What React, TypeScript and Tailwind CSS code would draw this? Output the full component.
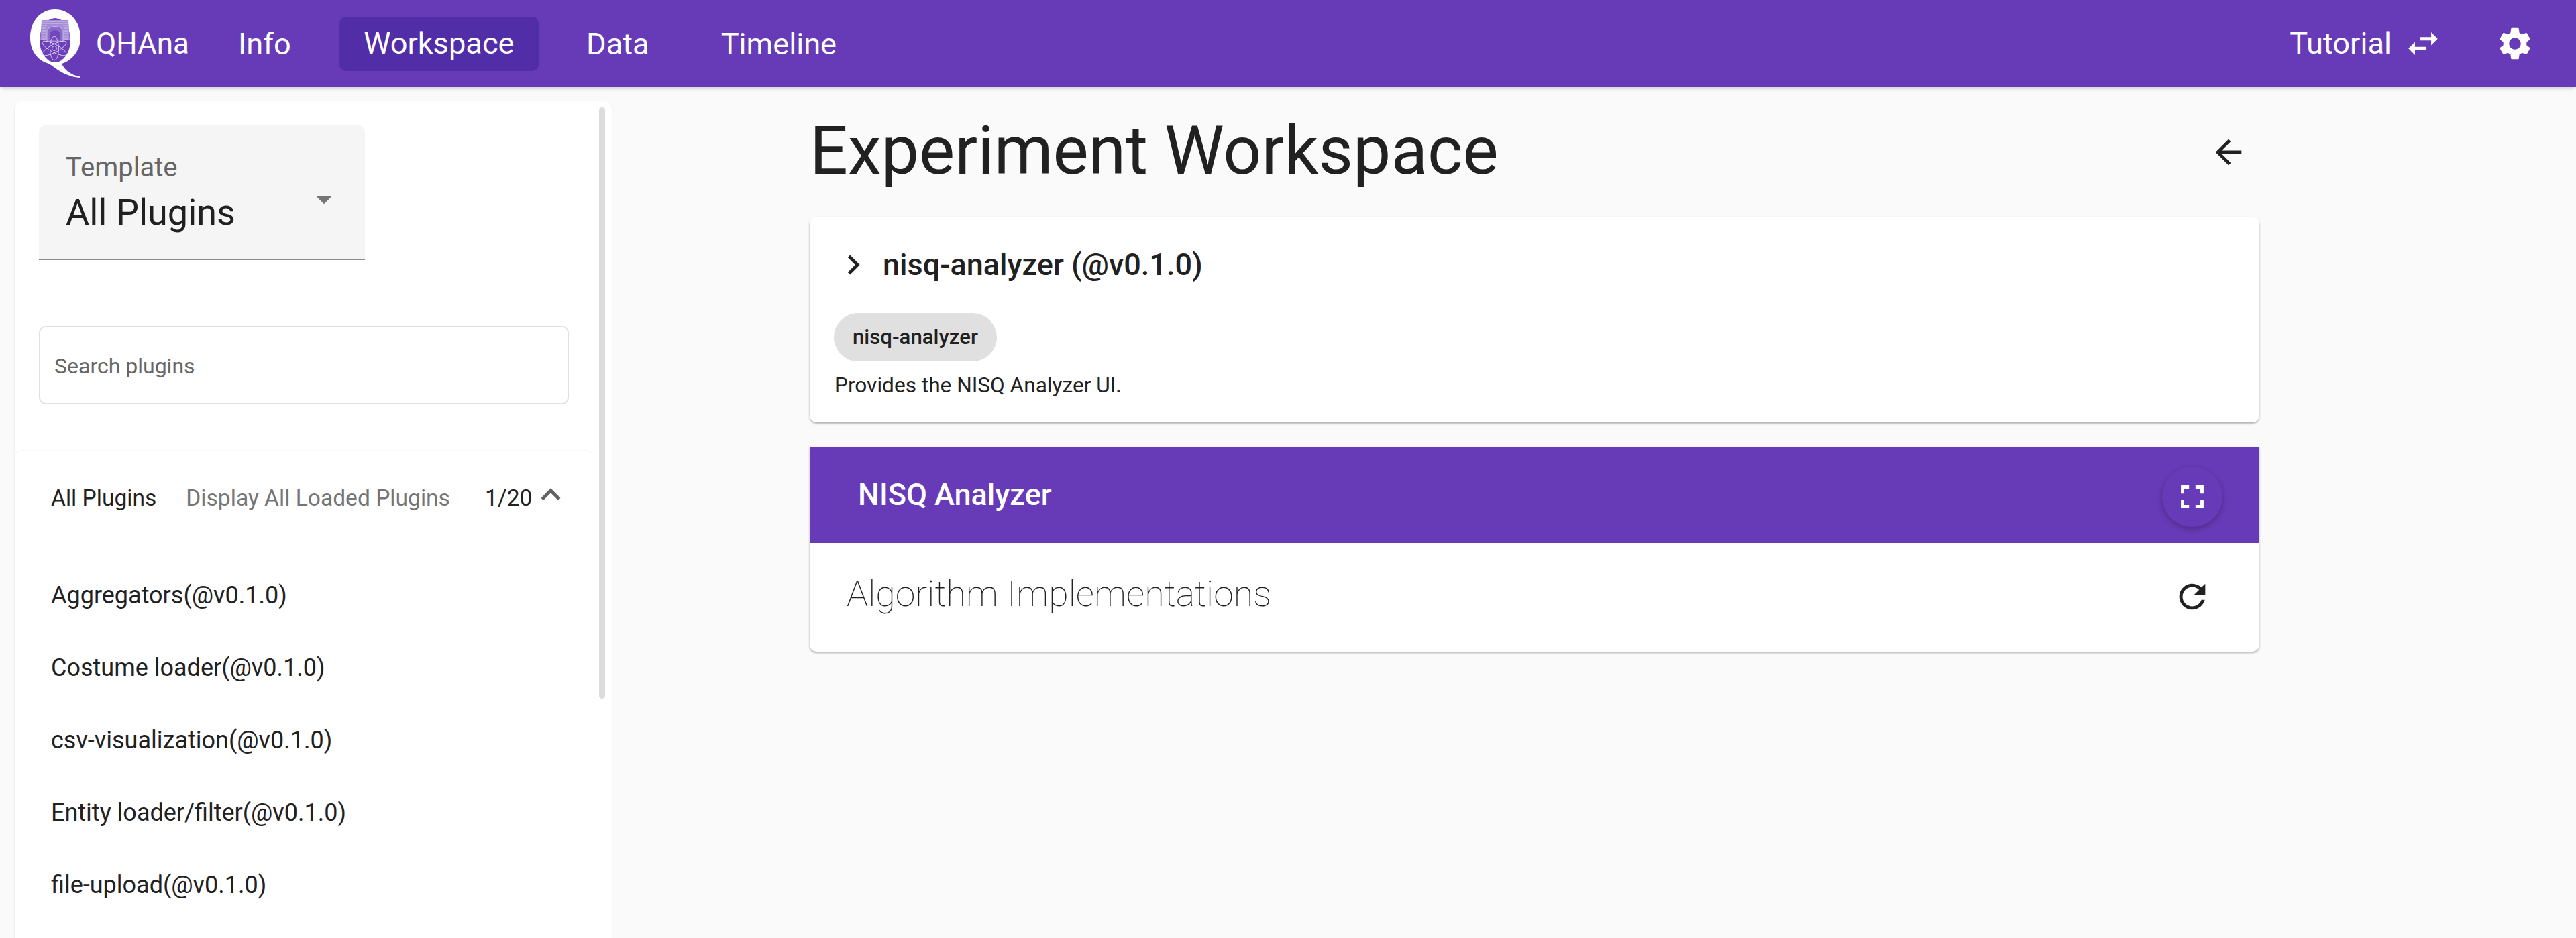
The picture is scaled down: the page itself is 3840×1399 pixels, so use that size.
const font = "font-['Roboto',sans-serif]";

const Icon = ({ d, className }: { d: string; className: string }) => (
  <svg viewBox="0 0 24 24" fill="currentColor" className={className}>
    <path d={d} />
  </svg>
);

const paths = {
  swap: "M6.99 11L3 15l3.99 4v-3H14v-2H6.99v-3zM21 9l-3.99-4v3H10v2h7.01v3L21 9z",
  settings:
    "M19.14 12.94c.04-.3.06-.61.06-.94 0-.32-.02-.64-.07-.94l2.03-1.58c.18-.14.23-.41.12-.61l-1.92-3.32c-.12-.22-.37-.29-.59-.22l-2.39.96c-.5-.38-1.03-.7-1.62-.94l-.36-2.54c-.04-.24-.24-.41-.48-.41h-3.84c-.24 0-.43.17-.47.41l-.36 2.54c-.59.24-1.13.57-1.62.94l-2.39-.96c-.22-.08-.47 0-.59.22L2.74 8.87c-.12.21-.08.47.12.61l2.03 1.58c-.05.3-.09.63-.09.94s.02.64.07.94l-2.03 1.58c-.18.14-.23.41-.12.61l1.92 3.32c.12.22.37.29.59.22l2.39-.96c.5.38 1.03.7 1.62.94l.36 2.54c.05.24.24.41.48.41h3.84c.24 0 .44-.17.47-.41l.36-2.54c.59-.24 1.13-.56 1.62-.94l2.39.96c.22.08.47 0 .59-.22l1.92-3.32c.12-.22.07-.47-.12-.61l-2.01-1.58zM12 15.6c-1.98 0-3.6-1.62-3.6-3.6s1.62-3.6 3.6-3.6 3.6 1.62 3.6 3.6-1.62 3.6-3.6 3.6z",
  back: "M20 11H7.83l5.59-5.59L12 4l-8 8 8 8 1.41-1.41L7.83 13H20v-2z",
  refresh:
    "M17.65 6.35C16.2 4.9 14.21 4 12 4c-4.42 0-7.99 3.58-7.99 8s3.57 8 7.99 8c3.73 0 6.84-2.55 7.73-6h-2.08c-.82 2.33-3.04 4-5.65 4-3.31 0-6-2.69-6-6s2.69-6 6-6c1.66 0 3.14.69 4.22 1.78L13 11h7V4l-2.35 2.35z",
  fullscreen: "M7 14H5v5h5v-2H7v-3zm-2-4h2V7h3V5H5v5zm12 7h-3v2h5v-5h-2v3zM14 5v2h3v3h2V5h-5z",
  chevron: "M10 6L8.59 7.41 13.17 12l-4.58 4.59L10 18l6-6z",
  less: "M12 8l-6 6 1.41 1.41L12 10.83l4.59 4.58L18 14z",
  drop: "M7 10l5 5 5-5z",
};

// university crest inside a serif Q
const Logo = () => (
  <svg viewBox="0 0 75 102" className="w-[75px] h-[102px]">
    <path
      d="M37 0C15 0 0 18 0 42c0 19 10 33 25 38 11 4 22 20 50 22v-1.500C60 98 51 90 47 81 63 76 75 61 75 42 75 18 59 0 37 0z"
      fill="#ffffff"
    />
    <ellipse cx="37" cy="46" rx="23" ry="33" fill="#6b40b9" />
    <path d="M17 16h40l2 30H15z" fill="#a58cd6" />
    <g stroke="#e4dcf5" strokeWidth="0.700" fill="none">
      <path d="M17 18h40M17 21h40M17 24h8M49 24h8M17 28h7M50 28h7M17 32h7M50 32h7M17 36h7M50 36h7M17 40h6M51 40h6M17 44h6M51 44h6" />
    </g>
    <path d="M25 48V33c0-10 24-10 24 0v15z" fill="#8a6bca" stroke="#d9cdf0" strokeWidth="0.800" />
    <path d="M30 46V35c0-5 14-5 14 0v11z" fill="#6f48bb" />
    <g stroke="#e9e2f7" strokeWidth="0.800" fill="none">
      <ellipse cx="36" cy="58" rx="6.500" ry="18" />
      <ellipse cx="36" cy="58" rx="20" ry="6" transform="rotate(28 36 58)" />
      <ellipse cx="36" cy="58" rx="20" ry="6" transform="rotate(-28 36 58)" />
      <circle cx="36" cy="58" r="3.500" />
    </g>
  </svg>
);

const plugins = [
  "Aggregators(@v0.1.0)",
  "Costume loader(@v0.1.0)",
  "csv-visualization(@v0.1.0)",
  "Entity loader/filter(@v0.1.0)",
  "file-upload(@v0.1.0)",
];

const NavBar = () => (
  <header className="h-[130px] shrink-0 bg-[#673ab7] text-white flex items-center shadow-md">
    <div className="ml-[45px] flex items-center">
      <Logo />
      <span className="ml-[23px] text-[44px]">QHAna</span>
    </div>
    <nav className="ml-[37px] flex items-center gap-[35px] text-[45.2px]">
      <a className="px-[36px] py-[18px] rounded-[10px] leading-[45px]">Info</a>
      <a className="ml-[1px] px-[36.500px] h-[81px] flex items-center rounded-[10px] bg-[#512da8]">Workspace</a>
      <a className="px-[36px] py-[18px] rounded-[10px] leading-[45px]">Data</a>
      <a className="px-[36px] py-[18px] rounded-[10px] leading-[45px]">Timeline</a>
    </nav>
    <div className="ml-auto mr-[62px] flex items-center">
      <span className="text-[45.2px]">Tutorial</span>
      <Icon d={paths.swap} className="ml-[18px] w-[58px] h-[58px]" />
      <Icon d={paths.settings} className="ml-[79px] w-[58px] h-[58px]" />
    </div>
  </header>
);

const Sidebar = () => (
  <aside className="ml-[22px] mt-[21px] w-[890px] shrink-0 bg-white rounded-t-[10px] shadow-sm relative h-[1400px] overflow-hidden">
    <div className="absolute right-[10px] top-[9px] w-[9px] h-[882px] rounded-full bg-[#dcdcdc]" />
    <div className="pl-[36px] pt-[36px]">
      <div className="w-[486px] h-[201px] rounded-t-[10px] bg-[#f5f5f5] border-b-[2.4px] border-[#8c8c8c] pl-[40px] pt-[39px] relative">
        <div className="text-[40px] leading-[48px] text-[#666666]">Template</div>
        <div className="mt-[11px] text-[54px] leading-[64px] text-[#212121]">All Plugins</div>
        <Icon d={paths.drop} className="absolute left-[396px] top-[81px] w-[58px] h-[58px] text-[#757575]" />
      </div>
      <div className="mt-[98px] w-[790px] h-[117px] rounded-[10px] border-[2.4px] border-[#e0e0e0] flex items-center pl-[21px] pt-[3px] text-[32px] text-[#666666]">
        Search plugins
      </div>
    </div>
    <div className="mt-[69px] w-[862px] rounded-t-[10px] border-t-[1px] border-[#f0f0f0] shadow-[0_-1px_2px_rgba(0,0,0,0.03)]">
      <div className="pl-[54px] h-[140px] flex items-center text-[33.6px] relative">
        <span className="text-[#212121]">All Plugins</span>
        <span className="ml-[44px] text-[#757575]">Display All Loaded Plugins</span>
        <span className="ml-[52px] text-[#212121]">1/20</span>
        <Icon d={paths.less} className="absolute left-[770px] top-[36px] w-[58px] h-[58px] text-[#616161]" />
      </div>
      <ul className="mt-[21px]">
        {plugins.map((p) => (
          <li key={p} className="pl-[54px] h-[108px] flex items-center text-[36px] text-[#212121]">
            {p}
          </li>
        ))}
      </ul>
    </div>
  </aside>
);

const Main = () => (
  <main className="ml-[295px] w-[2161px] shrink-0 text-[#212121]">
    <div className="h-[193px] flex items-center justify-between">
      <h1 className="text-[100.3px] leading-none pb-[3px]">Experiment Workspace</h1>
      <Icon d={paths.back} className="mr-[17px] w-[58px] h-[58px]" />
    </div>
    <section className="h-[307px] bg-white rounded-[10px] shadow-[0_2px_3px_rgba(0,0,0,0.3)]">
      <div className="h-[144px] pl-[36px] flex items-center">
        <Icon d={paths.chevron} className="w-[58px] h-[58px]" />
        <span className="ml-[15px] text-[45px] font-medium">nisq-analyzer (@v0.1.0)</span>
      </div>
      <div className="ml-[36px] w-[243px] h-[72px] rounded-full bg-[#e0e0e0] flex items-center justify-center pt-[1px] text-[31.2px] font-medium">
        nisq-analyzer
      </div>
      <p className="ml-[37px] mt-[18px] text-[31.6px] leading-[36px]">Provides the NISQ Analyzer UI.</p>
    </section>
    <section className="mt-[36px] h-[306px] bg-white rounded-b-[10px] shadow-[0_2px_3px_rgba(0,0,0,0.3)]">
      <div className="h-[144px] bg-[#673ab7] text-white flex items-center pl-[72px] pr-[55px] justify-between">
        <span className="text-[45px] font-medium">NISQ Analyzer</span>
        <div className="w-[90px] h-[90px] mb-[-6px] rounded-full bg-[#673ab7] flex items-center justify-center shadow-[0_3px_8px_rgba(0,0,0,0.25)]">
          <Icon d={paths.fullscreen} className="w-[58px] h-[58px]" />
        </div>
      </div>
      <div className="h-[162px] flex items-center justify-between pl-[55px] pr-[71px]">
        <span className="text-[53.8px] font-thin text-[#212121] pb-[9px]">Algorithm Implementations</span>
        <Icon d={paths.refresh} className="w-[58px] h-[58px] mb-[3px]" />
      </div>
    </section>
  </main>
);

export default function App() {
  return (
    <div className={`${font} h-[1399px] overflow-hidden bg-[#fafafa] flex flex-col`}>
      <NavBar />
      <div className="flex flex-1 min-h-0">
        <Sidebar />
        <Main />
      </div>
    </div>
  );
}
